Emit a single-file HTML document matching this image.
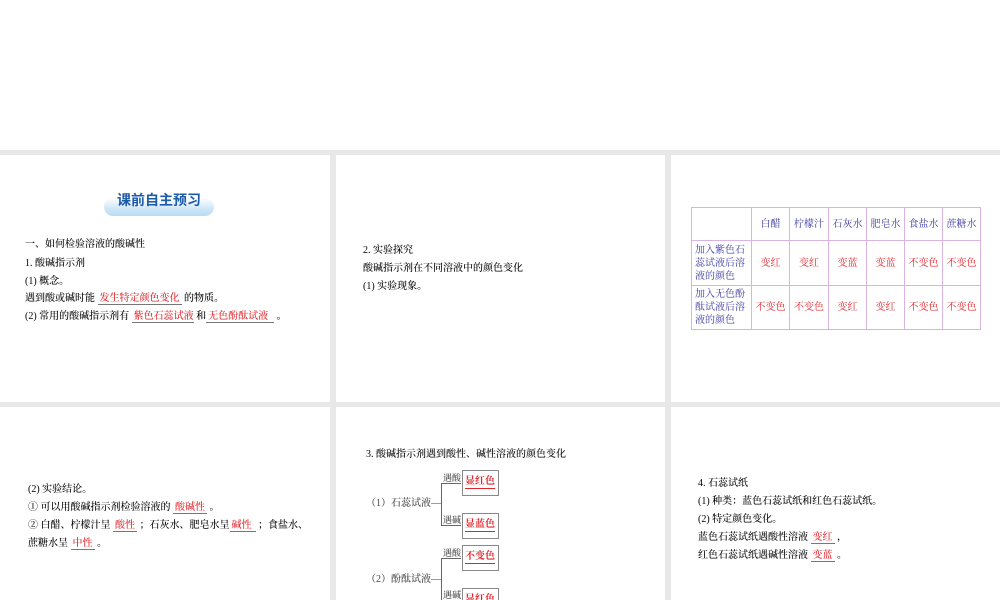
<!DOCTYPE html><html style="overflow:hidden;height:600px"><head><meta charset="utf-8"><style>
body{margin:0;width:1000px;height:600px;position:relative;background:#fff;overflow:hidden;font-family:"Liberation Serif","Noto Serif CJK SC",serif;font-size:10px;color:#000}
.g{position:absolute;background:#e8e8e8}
.t{position:absolute;white-space:nowrap;line-height:12px;font-weight:500}
.r{color:#e0262c;border-bottom:1px solid #777;display:inline-block;padding:0 2px;line-height:11px}
table{position:absolute;left:691px;top:207px;border-collapse:collapse;font-size:10px}
td{border:1px solid #d9b4e3;text-align:center;color:#3a3aa0;padding:0;line-height:13px}
td.c{color:#e0262c}
td.h{text-align:left;padding-left:3px}
.box{position:absolute;width:35px;height:24px;border:1px solid #888;background:#fff}
.box span{position:absolute;left:2px;top:5px;color:#e0262c;border-bottom:1px solid #e0262c;line-height:12px;font-size:10px;white-space:nowrap;font-weight:bold}
.ln{position:absolute;background:#666}
#clip{position:absolute;left:0;top:0;width:1000px;height:600px;overflow:hidden}
</style></head><body><div id="clip">
<div class="g" style="left:0;top:150px;width:1000px;height:5px"></div>
<div class="g" style="left:0;top:402px;width:1000px;height:5px"></div>
<div class="g" style="left:330px;top:150px;width:6px;height:450px"></div>
<div class="g" style="left:665px;top:150px;width:6px;height:450px"></div>

<div style="position:absolute;left:104px;top:198px;width:110px;height:18px;border-radius:9px;background:linear-gradient(#fff,#cfe6f7 60%,#b9dbf3);"></div>
<div class="t" style="left:117px;top:191px;font-family:'Liberation Sans','Noto Sans CJK SC',sans-serif;font-size:14px;font-weight:bold;color:#1d5aa8;line-height:18px">课前自主预习</div>
<div class="t" style="left:25px;top:239px">一、如何检验溶液的酸碱性</div>
<div class="t" style="left:25px;top:258px">1. 酸碱指示剂</div>
<div class="t" style="left:25px;top:276px">(1) 概念。</div>
<div class="t" style="left:25px;top:293px">遇到酸或碱时能 <span class="r">发生特定颜色变化</span> 的物质。</div>
<div class="t" style="left:25px;top:311px">(2) 常用的酸碱指示剂有 <span class="r" style="width:58px">紫色石蕊试液</span> 和<span class="r" style="width:64px">无色酚酞试液</span> 。</div>

<div class="t" style="left:363px;top:245px">2. 实验探究</div>
<div class="t" style="left:363px;top:263px">酸碱指示剂在不同溶液中的颜色变化</div>
<div class="t" style="left:363px;top:281px">(1) 实验现象。</div>

<table>
<tr style="height:33px"><td style="width:59px"></td><td style="width:37px">白醋</td><td style="width:38px">柠檬汁</td><td style="width:37px">石灰水</td><td style="width:37px">肥皂水</td><td style="width:37px">食盐水</td><td style="width:37px">蔗糖水</td></tr>
<tr style="height:45px"><td class="h">加入紫色石<br>蕊试液后溶<br>液的颜色</td><td class="c">变红</td><td class="c">变红</td><td class="c">变蓝</td><td class="c">变蓝</td><td class="c">不变色</td><td class="c">不变色</td></tr>
<tr style="height:44px"><td class="h">加入无色酚<br>酞试液后溶<br>液的颜色</td><td class="c">不变色</td><td class="c">不变色</td><td class="c">变红</td><td class="c">变红</td><td class="c">不变色</td><td class="c">不变色</td></tr>
</table>

<div class="t" style="left:28px;top:484px">(2) 实验结论。</div>
<div class="t" style="left:28px;top:502px">① 可以用酸碱指示剂检验溶液的 <span class="r" style="width:30px">酸碱性</span> 。</div>
<div class="t" style="left:28px;top:520px">② 白醋、柠檬汁呈 <span class="r" style="width:20px">酸性</span> ；石灰水、肥皂水呈<span class="r" style="width:22px">碱性</span> ；食盐水、</div>
<div class="t" style="left:28px;top:538px">蔗糖水呈 <span class="r" style="width:20px">中性</span> 。</div>

<div class="t" style="left:366px;top:449px">3. 酸碱指示剂遇到酸性、碱性溶液的颜色变化</div>
<div class="t" style="left:366px;top:498px;color:#444">（1）石蕊试液—</div>
<div class="ln" style="left:441px;top:483px;width:1px;height:42px"></div>
<div class="ln" style="left:441px;top:483px;width:20px;height:1px"></div>
<div class="ln" style="left:441px;top:525px;width:20px;height:1px"></div>
<div class="t" style="left:443px;top:472px;font-size:9px;color:#444">遇酸</div>
<div class="t" style="left:443px;top:514px;font-size:9px;color:#444">遇碱</div>
<div class="box" style="left:462px;top:470px"><span>显红色</span></div>
<div class="box" style="left:462px;top:513px"><span>显蓝色</span></div>
<div class="t" style="left:366px;top:574px;color:#444">（2）酚酞试液—</div>
<div class="ln" style="left:441px;top:558px;width:1px;height:42px"></div>
<div class="ln" style="left:441px;top:558px;width:20px;height:1px"></div>
<div class="t" style="left:443px;top:547px;font-size:9px;color:#444">遇酸</div>
<div class="t" style="left:443px;top:589px;font-size:9px;color:#444">遇碱</div>
<div class="box" style="left:462px;top:545px"><span>不变色</span></div>
<div class="box" style="left:462px;top:588px"><span>显红色</span></div>

<div class="t" style="left:698px;top:478px">4. 石蕊试纸</div>
<div class="t" style="left:698px;top:496px">(1) 种类：蓝色石蕊试纸和红色石蕊试纸。</div>
<div class="t" style="left:698px;top:514px">(2) 特定颜色变化。</div>
<div class="t" style="left:698px;top:532px">蓝色石蕊试纸遇酸性溶液 <span class="r" style="width:20px">变红</span> ，</div>
<div class="t" style="left:698px;top:550px">红色石蕊试纸遇碱性溶液 <span class="r" style="width:20px">变蓝</span> 。</div>
</div></body></html>
